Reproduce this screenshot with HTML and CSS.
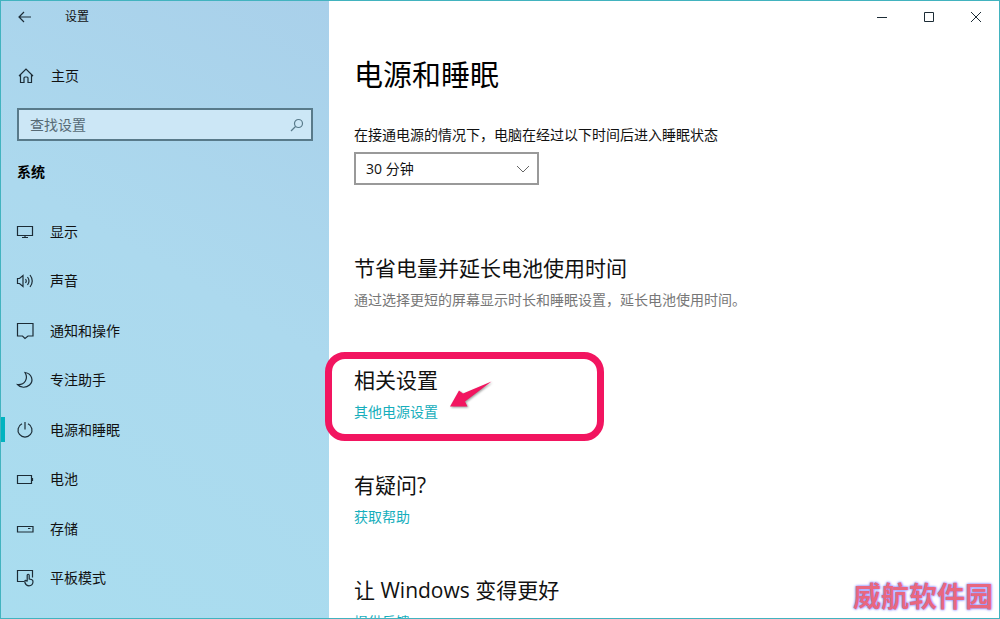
FILE: index.html
```html
<!DOCTYPE html>
<html lang="zh-CN">
<head>
    <meta charset="UTF-8">
    <meta name="viewport" content="width=device-width, initial-scale=1.0">
    <title>设置</title>
    <link rel="stylesheet" href="styles.css">
</head>
<body>

    <div class="window">
        <aside class="sidebar">
            <div class="titlebar">
                <button class="back" aria-label="返回">
                    <svg width="14" height="12" viewBox="0 0 14 12"><path d="M13 6H1M6 1L1 6l5 5"/></svg>
                </button>
                <span class="app-name">设置</span>
            </div>

            <a class="home" href="#">
                <svg width="18" height="18" viewBox="0 0 18 18"><path d="M2 9L9 2l7 7M3.500 7.500V15.500H7V11q0-1 1-1h2q1 0 1 1v4.500h3.500V7.500"/></svg>
                主页
            </a>

            <div class="search">
                <input type="text" placeholder="查找设置" aria-label="查找设置">
                <svg width="14" height="14" viewBox="0 0 14 14"><circle cx="8.500" cy="5.500" r="4"/><path d="M5.500 8.500L1 13"/></svg>
            </div>

            <h2 class="category">系统</h2>

            <nav class="nav">
                <a href="#">
                    <svg width="18" height="18" viewBox="0 0 18 18"><path d="M1.500 3.500h15v9h-15zM9 12.500v2M6 14.500h6"/></svg>
                    显示
                </a>
                <a href="#">
                    <svg width="18" height="18" viewBox="0 0 18 18"><path d="M1.500 6.500h2L7 3.500v11L3.500 11.500h-2zM9.500 7q1.500 2 0 4M11.500 5q3 4 0 8M14 3q4.500 6 0 12"/></svg>
                    声音
                </a>
                <a href="#">
                    <svg width="18" height="18" viewBox="0 0 18 18"><path d="M1.500 1.500h15.500v12.500h-5L9 16.500 6.500 14h-5z"/></svg>
                    通知和操作
                </a>
                <a href="#">
                    <svg width="18" height="18" viewBox="0 0 18 18"><path d="M9 1.500c7 1 9 8.500 4.500 12.500-3.500 3.200-9 3-12-.5 7.500.5 11-6 7.500-12z"/></svg>
                    专注助手
                </a>
                <a class="active" href="#">
                    <svg width="18" height="18" viewBox="0 0 18 18"><path d="M9 1v7.500M6 2.800a7 7 0 1 0 6 0"/></svg>
                    电源和睡眠
                </a>
                <a href="#">
                    <svg width="18" height="18" viewBox="0 0 18 18"><path d="M1.500 5.500h14v8h-14zM16.500 8v3"/></svg>
                    电池
                </a>
                <a href="#">
                    <svg width="18" height="18" viewBox="0 0 18 18"><path d="M1.500 6.500h15.500v5.500h-15.500zM12 8.500h2.500"/></svg>
                    存储
                </a>
                <a href="#">
                    <svg width="18" height="18" viewBox="0 0 18 18"><path d="M8 12.500H1.500v-11h15v7M11.200 11.500V6q1-1.500 2 0v4l2.300.5q1.700.5 1.500 2.500-.5 3.800-4 3.800-3 0-4-3-.7-2.300.7-2.500 1 0 1.500 1.200z"/></svg>
                    平板模式
                </a>
            </nav>
        </aside>

        <main class="content">
            <div class="window-buttons">
                <button aria-label="最小化"><svg width="12" height="12" viewBox="0 0 12 12"><path d="M1 6.500h10"/></svg></button>
                <button aria-label="最大化"><svg width="12" height="12" viewBox="0 0 12 12"><path d="M1.500 1.500h9v9h-9z"/></svg></button>
                <button aria-label="关闭"><svg width="12" height="12" viewBox="0 0 12 12"><path d="M1 1l10 10M11 1L1 11"/></svg></button>
            </div>

            <h1>电源和睡眠</h1>

            <label class="sleep-label" for="sleep">在接通电源的情况下，电脑在经过以下时间后进入睡眠状态</label>
            <div class="select">
                <select id="sleep">
                    <option>30 分钟</option>
                </select>
                <svg width="14" height="8" viewBox="0 0 14 8"><path d="M1 1l6 6 6-6"/></svg>
            </div>

            <section class="battery">
                <h2>节省电量并延长电池使用时间</h2>
                <p>通过选择更短的屏幕显示时长和睡眠设置，延长电池使用时间。</p>
            </section>

            <section class="related">
                <h2>相关设置</h2>
                <a href="#">其他电源设置</a>
                <div class="callout">
                    <svg class="arrow" width="44" height="30" viewBox="0 0 44 30"><path d="M42.500 1.500L14 13.500 10 10.500 1 26.500l17.500 0-2.500-5z"/></svg>
                </div>
            </section>

            <section>
                <h2>有疑问?</h2>
                <a href="#">获取帮助</a>
            </section>

            <section>
                <h2>让 Windows 变得更好</h2>
                <a href="#">提供反馈</a>
            </section>
        </main>

        <div class="watermark">威航软件园</div>
    </div>

</body>
</html>
```
FILE: styles.css
```css
* {
    box-sizing: border-box;
}
body {
    margin: 0;
    font-family: "Open Sans", "Noto Sans CJK SC", sans-serif;
    font-size: 14px;
    line-height: 20px;
    color: #111;
}
h1, h2, p {
    margin: 0;
    font-weight: normal;
}
a {
    color: inherit;
    text-decoration: none;
}
button {
    display: flex;
    align-items: center;
    justify-content: center;
    padding: 0;
    border: none;
    background: none;
}
svg {
    flex: none;
    fill: none;
    stroke: #1c2c36;
    stroke-width: 1.2;
}

.window {
    position: relative;
    display: flex;
    height: 100vh;
    border: 1px solid #42b3bf;
    background-color: #fff;
    overflow: hidden;
}

/* left side */
.sidebar {
    display: flex;
    flex-direction: column;
    width: 328px;
    flex: none;
    background: linear-gradient(30deg, #a9ddef 0%, #acd9ee 55%, #a9d0ea 100%);
}
.titlebar {
    display: flex;
    align-items: center;
    height: 32px;
}
.back {
    width: 48px;
    height: 32px;
}
.app-name {
    margin-left: 16px;
    font-size: 12px;
}
.home {
    display: flex;
    align-items: center;
    gap: 16px;
    height: 40px;
    margin-top: 23px;
    padding-left: 16px;
}
.search {
    display: flex;
    align-items: center;
    height: 33px;
    margin: 12px 16px 0;
    padding: 0 7px 0 11px;
    border: 2px solid #587a8a;
    background-color: #cce7f6;
}
.search input {
    flex: 1;
    min-width: 0;
    padding: 0;
    border: none;
    outline: none;
    background: none;
    font: inherit;
}
.search input::placeholder {
    color: #566a75;
}
.search svg {
    stroke: #587a8a;
}
.category {
    margin: 21px 16px 25px;
    font-size: 14px;
    font-weight: bold;
    color: #000;
}
.nav {
    display: flex;
    flex-direction: column;
    flex: 1;
    margin-bottom: 15px;
}
.nav a {
    display: flex;
    align-items: center;
    flex: 1;
    gap: 16px;
    padding-left: 15px;
}
.nav .active {
    padding-left: 0;
}
.active::before {
    content: "";
    width: 4px;
    height: 25px;
    margin-right: -5px;
    background-color: #00b3c0;
}

/* right side */
.content {
    flex: 1;
    padding-left: 25px;
}
.window-buttons {
    display: flex;
    justify-content: flex-end;
}
.window-buttons button {
    width: 47px;
    height: 32px;
}
.window-buttons svg {
    stroke-width: 1;
}
h1 {
    margin-top: 20px;
    font-size: 29px;
    line-height: 44px;
    color: #000;
}
.sleep-label {
    display: block;
    margin-top: 28px;
}
.select {
    display: flex;
    align-items: center;
    width: 185px;
    height: 33px;
    margin-top: 7px;
}
.select select {
    width: 100%;
    height: 100%;
    padding: 0 10px;
    border: 2px solid #999;
    border-radius: 0;
    background-color: #fff;
    appearance: none;
    font: inherit;
    color: inherit;
}
.select svg {
    margin-left: -23px;
    stroke: #666;
    stroke-width: 1;
    pointer-events: none;
}
section {
    margin-bottom: 48px;
}
section h2 {
    margin-bottom: 6px;
    font-size: 21px;
    line-height: 31px;
}
section a {
    display: block;
    color: #16aebc;
}
.battery {
    margin-top: 68px;
    margin-bottom: 55px;
}
.battery p {
    color: #777;
}

/* pink frame drawn over the related settings */
.related {
    position: relative;
}
.callout {
    position: absolute;
    top: -13px;
    left: -29px;
    width: 279px;
    height: 89px;
    border: 7px solid #f21560;
    border-radius: 20px;
    pointer-events: none;
}
.arrow {
    position: absolute;
    top: 21px;
    left: 117px;
    filter: drop-shadow(1px 1px 1px #999);
}
.arrow path {
    fill: #f21560;
    stroke: none;
}

.watermark {
    position: absolute;
    right: 6px;
    bottom: 3px;
    font-size: 28px;
    line-height: 38px;
    font-weight: bold;
    color: #e8677f;
    text-shadow: 0 0 2px #8a8aff, 0 0 3px #8a8aff;
}
```
